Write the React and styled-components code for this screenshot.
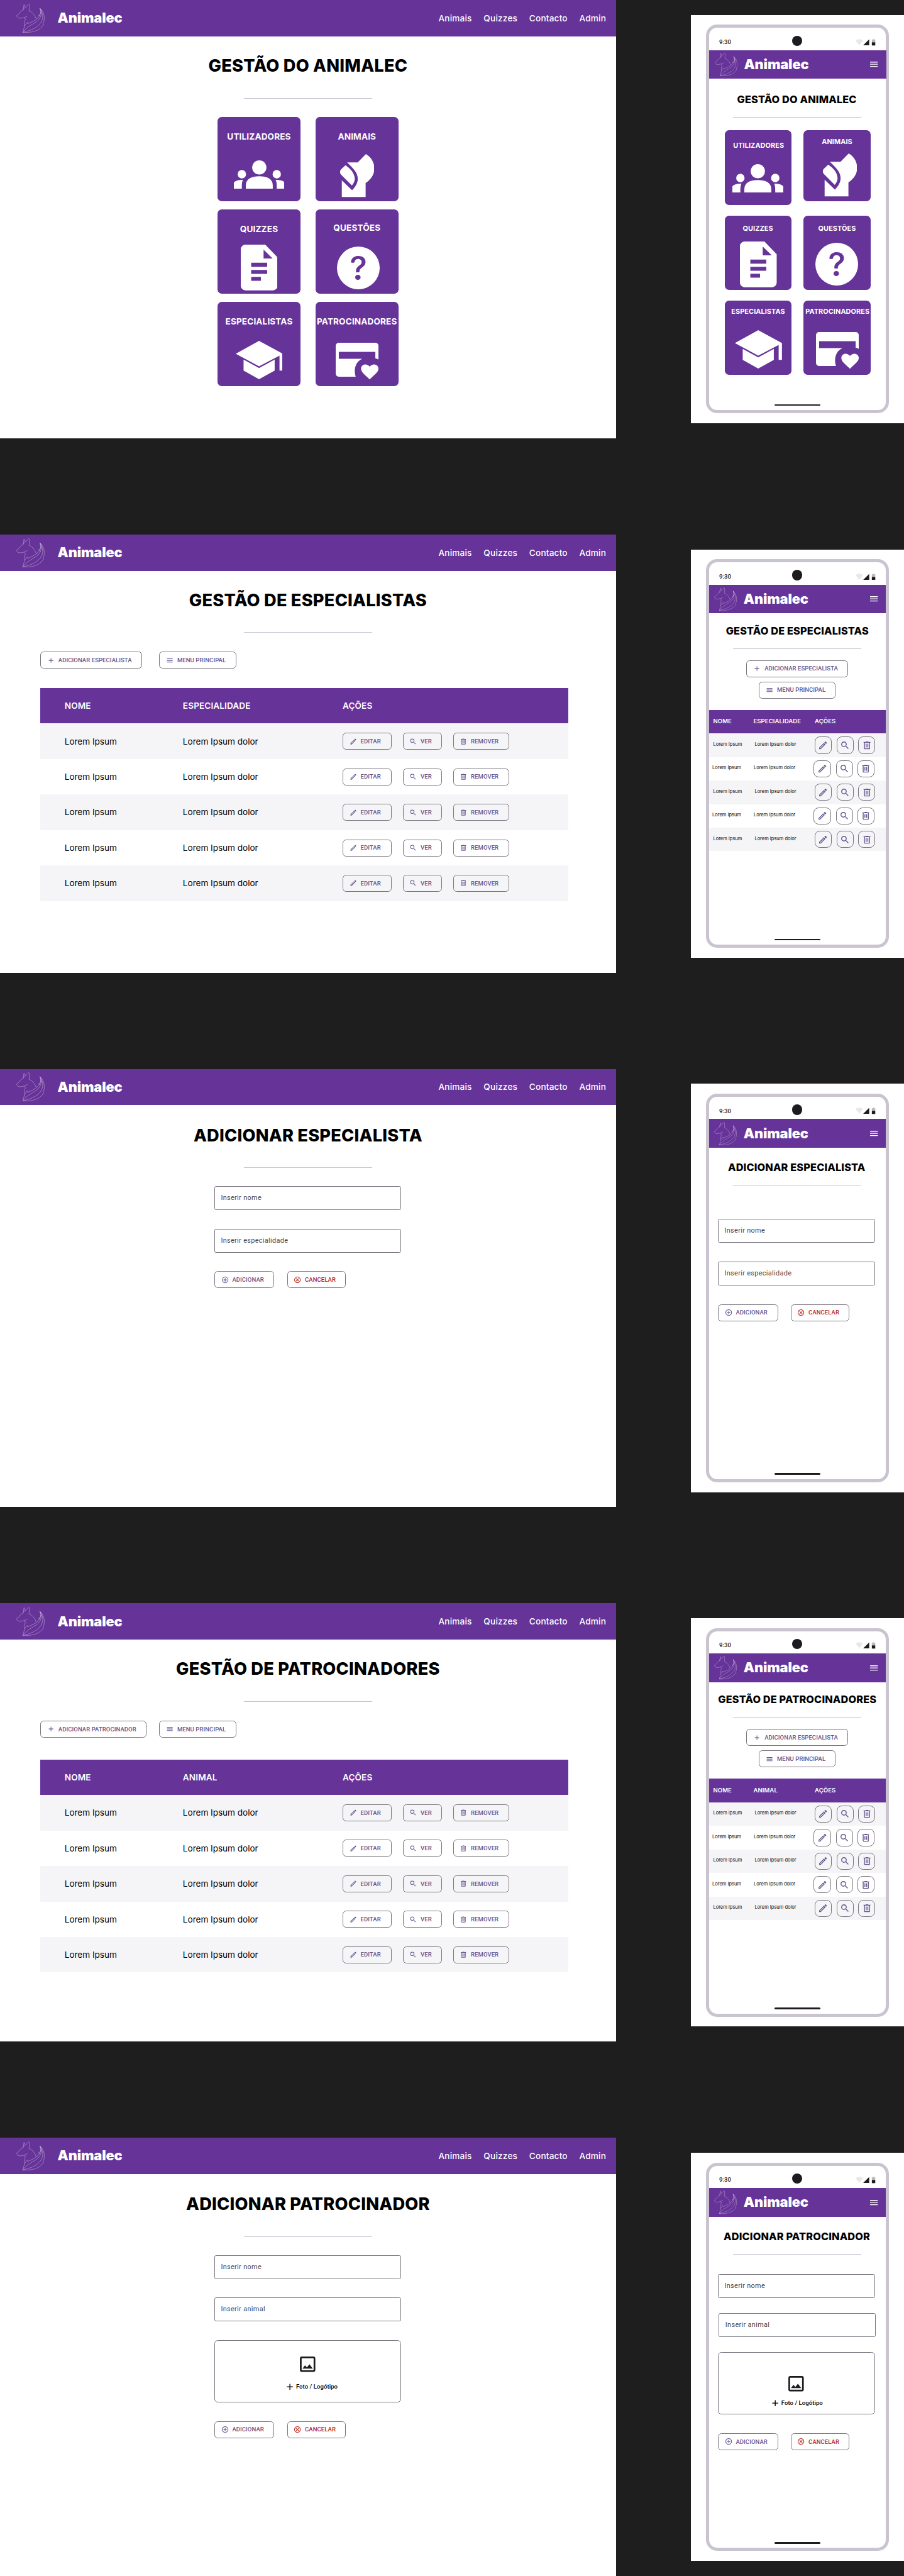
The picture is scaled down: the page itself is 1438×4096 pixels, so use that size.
import React from 'react';
import styled, { createGlobalStyle, css } from 'styled-components';
import {
  MdAdd,
  MdMenu,
  MdOutlineEdit,
  MdSearch,
  MdAddCircleOutline,
  MdOutlineCancel,
  MdOutlineImage,
} from 'react-icons/md';
import { BsQuestionCircleFill } from 'react-icons/bs';

const c = {
  canvas: '#1e1e1e',
  brand: '#663399',
  accent: '#65558f',
  outline: '#79747e',
  divider: '#cac4d0',
  frame: '#cac4d0',
  ink: '#1d1b20',
  muted: '#49454f',
  danger: '#b3261e',
  stripe: '#f5f5f8',
};

const inter = `Inter, "Liberation Sans", sans-serif`;
const roboto = `Roboto, "Liberation Sans", sans-serif`;

const Global = createGlobalStyle`
  *, *::before, *::after { box-sizing: border-box; }
  body { margin: 0; background: ${c.canvas}; overflow-x: hidden; }
  svg { display: block; flex: none; }
`;

/* ---------- board ---------- */

const Board = styled.main`
  zoom: 0.6804;
  display: flex;
  flex-direction: column;
  gap: 225px;
  width: 2114px;
  height: 6020px;
  overflow: hidden;
  background: ${c.canvas};
  font-family: ${inter};
`;

const Pair = styled.section`
  display: flex;
  gap: 175px;
  height: 1024px;
  flex: none;
`;

const Desktop = styled.div`
  width: 1440px;
  height: 1024px;
  flex: none;
  background: #fff;
`;

const MobileSheet = styled.div`
  flex: 1;
  height: 954px;
  margin-top: 35px;
  padding: 23px 0 0 35px;
  background: #fff;
`;

const Phone = styled.div`
  display: flex;
  flex-direction: column;
  width: 428px;
  height: 908px;
  border: 8px solid ${c.frame};
  border-radius: 26px;
  background: #fff;
`;

const PhoneBody = styled.div`
  flex: 1;
  min-height: 0;
`;

const HomeBar = styled.div`
  flex: none;
  align-self: center;
  width: 108px;
  height: 4px;
  margin-bottom: 10px;
  border-radius: 4px;
  background: ${c.ink};
`;

/* ---------- bars ---------- */

const StatusRow = styled.div`
  display: grid;
  grid-template-columns: 1fr 24px 1fr;
  align-items: center;
  height: 52px;
  padding: 10px 24px 0;
  flex: none;
`;

const Clock = styled.span`
  font: 500 14px/20px ${roboto};
  letter-spacing: 0.14px;
  color: ${c.ink};
  padding-top: 4px;
`;

const Camera = styled.span`
  width: 24px;
  height: 24px;
  margin-top: -2px;
  border-radius: 50%;
  background: ${c.ink};
`;

const StatusIcons = styled.span`
  display: flex;
  justify-content: flex-end;
  align-items: flex-end;
  padding-top: 5px;
`;

const TopBar = styled.header`
  display: flex;
  align-items: center;
  flex: none;
  height: 85px;
  padding: 0 23px 0 38px;
  background: ${c.brand};
  color: #fff;
  ${(p) =>
    p.$phone &&
    css`
      height: 67px;
      padding: 0 16px 0 13px;
      margin: 0 ${-(p.$nudge || 0)}px 0 ${p.$nudge || 0}px;
    `}
`;

const Brand = styled.span`
  margin-left: ${(p) => (p.$phone ? 15 : 30.5)}px;
  font: 900 32px/40px ${inter};
  letter-spacing: -0.2px;
`;

const Nav = styled.nav`
  display: flex;
  gap: 27.5px;
  margin-left: auto;
`;

const NavLink = styled.a`
  font: 500 20px/24px ${inter};
  letter-spacing: 0.3px;
`;

const MenuButton = styled.span`
  margin-left: auto;
  font-size: 24px;
`;

/* ---------- headings ---------- */

const Title = styled.h1`
  margin: ${(p) => p.$top}px 0 0 ${(p) => p.$dx || 0}px;
  font: 800 ${(p) => (p.$phone ? '24px/30px' : '40px/48px')} ${inter};
  letter-spacing: ${(p) => (p.$phone ? 0.22 : 0.33)}px;
  text-align: center;
  white-space: nowrap;
  color: #000;
`;

const Rule = styled.hr`
  width: 300px;
  height: 1px;
  margin: ${(p) => p.$top}px auto 0;
  border: 0;
  background: ${c.divider};
`;

/* ---------- dashboard cards ---------- */

const CardGrid = styled.div`
  display: grid;
  justify-content: center;
  margin-top: 43px;
  grid-template-columns: 194px 194px;
  grid-auto-rows: 197px;
  gap: 19px 35px;
  ${(p) =>
    p.$phone &&
    css`
      margin-top: 31px;
      margin-right: -1px;
      grid-template-columns: 156px 156px;
      grid-auto-rows: 174px;
      gap: 25px 29px;
    `}
`;

const Card = styled.a`
  display: flex;
  flex-direction: column;
  align-items: center;
  height: ${(p) => (p.$h ? `${p.$h}px` : '100%')};
  border-radius: 10px;
  background: ${c.brand};
  color: #fff;
`;

const CardLabel = styled.span`
  margin-top: ${(p) => p.$y - 12}px;
  margin-left: ${(p) => (p.$dx || 0) * 2}px;
  font: 700 ${(p) => (p.$phone ? 16 : 20)}px/24px ${inter};
  letter-spacing: ${(p) => (p.$phone ? 0.13 : 0.17)}px;
`;

const CardIcon = styled.span`
  margin-top: ${(p) => p.$gap}px;
  margin-left: ${(p) => (p.$dx || 0) * 2}px;
`;

/* ---------- buttons ---------- */

const Button = styled.button`
  display: inline-flex;
  align-items: center;
  gap: 8px;
  height: 40px;
  width: ${(p) => (p.$w ? `${p.$w}px` : 'auto')};
  flex: none;
  margin: 0;
  padding: 0 22px 0 ${(p) => (p.$compact ? 14.5 : 15)}px;
  border: 1px solid ${c.outline};
  border-radius: 8px;
  background: transparent;
  color: ${(p) => (p.$danger ? c.danger : c.accent)};
  font: 500 14px/20px ${roboto};
  letter-spacing: 0.1px;
  white-space: nowrap;
  svg { width: 18px; height: 18px; }
`;

const IconButton = styled.button`
  display: inline-flex;
  align-items: center;
  justify-content: center;
  flex: none;
  width: 40px;
  height: 40px;
  padding: 0;
  border: 1px solid ${c.outline};
  border-radius: 12px;
  background: transparent;
  color: ${c.accent};
  svg { width: 24px; height: 24px; }
`;

const Toolbar = styled.div`
  display: flex;
  gap: ${(p) => p.$gap}px;
  margin: 45px 0 0 94px;
`;

const PhoneToolbar = styled.div`
  display: flex;
  flex-direction: column;
  align-items: center;
  gap: 10px;
  margin-top: 27px;
`;

/* ---------- table ---------- */

const Table = styled.div`
  width: 1234px;
  margin: ${(p) => p.$top}px 0 0 94px;
  ${(p) =>
    p.$phone &&
    css`
      width: 100%;
      margin: 26.5px 0 0;
    `}
`;

const Row = styled.div`
  display: grid;
  align-items: center;
  grid-template-columns: 276.5px 373.5px 1fr;
  height: 83px;
  padding-left: 57px;
  font: 400 20px/24px ${inter};
  letter-spacing: -0.05px;
  color: #000;
  background: ${(p) => (p.$striped ? c.stripe : 'transparent')};
  ${(p) =>
    p.$phone &&
    css`
      grid-template-columns: 97px 140px 1fr;
      height: 55px;
      padding: 0 0 0 ${p.$striped ? 10 : 8}px;
      font-size: 11px;
      letter-spacing: 0;
    `}
`;

const HeadRow = styled(Row)`
  background: ${c.brand};
  color: #fff;
  font-weight: 600;
  letter-spacing: 0.15px;
  ${(p) =>
    p.$phone &&
    css`
      grid-template-columns: 94px 143.5px 1fr;
      padding-left: 10px;
      font-size: 14px;
    `}
`;

const PhoneCell = styled.span`
  margin-top: -3px;
`;

const Actions = styled.div`
  display: flex;
  gap: 26px;
`;

const PhoneActions = styled.div`
  display: grid;
  grid-template-columns: 52px 50px 40px;
`;

/* ---------- forms ---------- */

const Form = styled.form`
  display: flex;
  flex-direction: column;
  gap: ${(p) => p.$gap}px;
  width: ${(p) => (p.$phone ? 367 : 437)}px;
  margin: ${(p) => p.$top}px 0 0 ${(p) => (p.$phone ? 21 : 501)}px;
`;

const Field = styled.div`
  display: flex;
  align-items: center;
  height: 56px;
  padding: 0 14px;
  margin: 0 ${(p) => -(p.$nudge || 0)}px 0 ${(p) => p.$nudge || 0}px;
  border: 1px solid ${c.outline};
  border-radius: 4px;
  font: 400 16px/24px ${roboto};
  letter-spacing: 0.5px;
  color: ${c.muted};
`;

const Upload = styled.div`
  display: flex;
  flex-direction: column;
  align-items: center;
  height: 146.5px;
  padding-top: ${(p) => (p.$phone ? 49 : 32)}px;
  border: 1px solid ${c.outline};
  border-radius: 8px;
  color: ${c.ink};
`;

const UploadLabel = styled.span`
  display: flex;
  align-items: center;
  gap: 2.5px;
  margin-top: ${(p) => (p.$phone ? 10 : 16)}px;
  margin-left: ${(p) => (p.$phone ? 0 : 16)}px;
  font: 500 14px/24px ${roboto};
  letter-spacing: 0.1px;
  color: #000;
`;

const FormButtons = styled.div`
  display: flex;
  gap: 29.5px;
  margin-top: ${(p) => p.$extra || 0}px;
`;

/* ---------- drawings ---------- */

const FoxLogo = ({ width, height }) => (
  <svg width={width} height={height} viewBox="0 0 195 205" preserveAspectRatio="none" fill="none" stroke="#fff" strokeOpacity="0.66" strokeWidth="2.3" strokeLinejoin="round">
    <path d="M2 83C8 75 17 74 22 66C28 53 37 48 47 43L53 6L63 25L86 2C92 10 92 24 87 49C105 57 126 72 137 108" />
    <path d="M47 43C50 33 56 29 63 25M2 83C6 96 14 102 25 102C40 101 62 96 77 86" />
    <path d="M53 98C70 106 56 118 57 134C57 144 61 148 57 156L45 201" />
    <path d="M57 156C63 146 68 138 75 131L79 141C100 129 130 122 148 100C160 88 166 76 173 54" />
    <path d="M163 32C168 50 170 62 163 77L156 86L155 77M163 32C190 54 198 92 190 128C188 134 184 138 184 142L189 145C166 182 130 204 45 202" />
    <path d="M163 32C178 62 176 98 140 126C104 150 76 160 45 201" />
    <path d="M45 201C98 188 142 172 168 134C190 104 184 60 163 32" />
  </svg>
);

const UsersArt = () => (
  <svg width="119" height="66" viewBox="0 0 119 66" fill="#fff">
    <circle cx="59.5" cy="16.6" r="16.6" />
    <circle cx="18.7" cy="32.3" r="9.8" />
    <circle cx="100.3" cy="32.3" r="9.8" />
    <path d="M28 66V58C28 43 42 37 59.5 37S91 43 91 58V66Z" />
    <path d="M0 66V52C3 47.5 11 45.600 21.5 45.600C19 50 18.7 54 18.7 66ZM119 66V52C116 47.5 108 45.600 97.5 45.600C100 50 100.3 54 100.3 66Z" />
  </svg>
);

const AnimalArt = () => (
  <svg width="80" height="101" viewBox="0 0 80 101" fill="#fff">
    <path d="M16.3 19.3H41.3L60.3 0C73 7 80 20 80 34C80 48 72 59 59.7 67.6V100.5H4V61.2L28 84.4C37 75 41.5 67 41.3 57C41.3 44 31 33 16.3 19.3Z" />
    <path d="M12.5 26C23 33 34 44 34.3 57.5C34.3 64 31 70 27.7 73.4L2 47.7C-.7 45-.7 38.5 2 36Z" />
  </svg>
);

const DocArt = () => (
  <svg width="86" height="107" viewBox="0 0 86 107" fill="#fff" fillRule="evenodd">
    <path d="M10.7 0H57.3L86 29.6V96.2A10.7 10.7 0 0 1 75.3 106.9H10.7A10.7 10.7 0 0 1 0 96.2V10.7A10.7 10.7 0 0 1 10.7 0ZM53.3 11.8V32.5H74.5ZM24.3 42.3V51.8H61.7V42.3ZM24.3 59V68.3H61.7V59ZM24.3 75.5V84.7H47V75.5Z" />
  </svg>
);

const SchoolArt = () => (
  <svg width="110" height="90" viewBox="0 0 110 90" fill="#fff">
    <path d="M0 30L54.5 0L110 30V69.6H102.3V34.5L54.5 59.5Z" />
    <path d="M18.3 43.8L54.5 63.6L91 43.8V69.6L54.5 89.6L18.3 69.6Z" />
  </svg>
);

const SponsorArt = () => (
  <svg width="100" height="86" viewBox="0 0 100 86" fill="#fff">
    <path d="M7 0H93A7 7 0 0 1 100 7V39.3Q96.5 37 92.7 36.4V21.3H7.3V37.4H62C47 43.5 41 62 46.7 79.3H7A7 7 0 0 1 0 72.3V7A7 7 0 0 1 7 0Z" />
    <path d="M79.5 56C73 47 59.3 50 59.3 60.5C59.3 68 66 73 79.5 85.5C93 73 100 68 100 60.5C100 50 86 47 79.5 56Z" />
  </svg>
);

const TrashIcon = () => (
  <svg viewBox="0 0 24 24" fill="currentColor">
    <path d="M7 21q-.825 0-1.412-.587T5 19V6H4V4h5V3h6v1h5v2h-1v13q0 .825-.587 1.413T17 21H7ZM17 6H7v13h10V6ZM9 17h2V8H9v9Zm4 0h2V8h-2v9Z" />
  </svg>
);

const SystemIcons = () => (
  <svg width="46" height="16" viewBox="0 0 46 16">
    <path d="M0 4C5-.8 12.5-.8 17.3 4L8.7 14.3Z" fill="#e8e7ea" />
    <path d="M17.7 14.8L31.8 .6V14.8Z" fill={c.ink} />
    <path d="M38 1.8H40.3V.4H43.7V1.8H46V8H38Z" fill="#bbbabc" />
    <path d="M38 7.8H46V15.2H38Z" fill={c.ink} />
  </svg>
);

/* ---------- shared pieces ---------- */

const DesktopBar = () => (
  <TopBar>
    <FoxLogo width={66} height={68} />
    <Brand>Animalec</Brand>
    <Nav>
      {['Animais', 'Quizzes', 'Contacto', 'Admin'].map((item) => (
        <NavLink key={item}>{item}</NavLink>
      ))}
    </Nav>
  </TopBar>
);

const PhoneShell = ({ nudge, children }) => (
  <MobileSheet>
    <Phone>
      <StatusRow>
        <Clock>9:30</Clock>
        <Camera />
        <StatusIcons>
          <SystemIcons />
        </StatusIcons>
      </StatusRow>
      <TopBar $phone $nudge={nudge}>
        <FoxLogo width={53} height={55} />
        <Brand $phone>Animalec</Brand>
        <MenuButton>
          <MdMenu />
        </MenuButton>
      </TopBar>
      <PhoneBody>{children}</PhoneBody>
      <HomeBar />
    </Phone>
  </MobileSheet>
);

/* desk / phone: [label centre, icon top, icon shift, label shift, card height] */
const sections = [
  { label: 'UTILIZADORES', art: <UsersArt />, desk: [46, 102, 0], phone: [35, 79.5, 0, 1.5] },
  { label: 'ANIMAIS', art: <AnimalArt />, desk: [46, 87, 0], phone: [26, 54.5, 7, 0, 165] },
  { label: 'QUIZZES', art: <DocArt />, desk: [46, 83, 0], phone: [30, 61, 1.5, 0] },
  { label: 'QUESTÕES', art: <BsQuestionCircleFill size={100} />, desk: [44, 87, 4], phone: [30, 64, 0, 0] },
  { label: 'ESPECIALISTAS', art: <SchoolArt />, desk: [46, 92, 0], phone: [24.5, 69.5, 1, 0.5] },
  { label: 'PATROCINADORES', art: <SponsorArt />, desk: [46, 96.5, 0], phone: [24.5, 74, 1, 1] },
];

const SectionCards = ({ phone }) => (
  <CardGrid $phone={phone}>
    {sections.map((s) => {
      const [labelY, iconY, iconDx, labelDx, height] = phone ? s.phone : s.desk;
      return (
        <Card key={s.label} $h={height}>
          <CardLabel $phone={phone} $y={labelY} $dx={labelDx}>{s.label}</CardLabel>
          <CardIcon $gap={iconY - labelY - 12} $dx={iconDx}>{s.art}</CardIcon>
        </Card>
      );
    })}
  </CardGrid>
);

const rows = [0, 1, 2, 3, 4];

const DesktopTable = ({ second, top }) => (
  <Table $top={top}>
    <HeadRow>
      <span>NOME</span>
      <span>{second}</span>
      <span>AÇÕES</span>
    </HeadRow>
    {rows.map((i) => (
      <Row key={i} $striped={i % 2 === 0}>
        <span>Lorem Ipsum</span>
        <span>Lorem Ipsum dolor</span>
        <Actions>
          <Button $compact $w={114.5}><MdOutlineEdit />EDITAR</Button>
          <Button $compact $w={91.5}><MdSearch />VER</Button>
          <Button $compact $w={131}><TrashIcon />REMOVER</Button>
        </Actions>
      </Row>
    ))}
  </Table>
);

const PhoneTable = ({ second }) => (
  <Table $phone>
    <HeadRow $phone>
      <span>NOME</span>
      <span>{second}</span>
      <span>AÇÕES</span>
    </HeadRow>
    {rows.map((i) => (
      <Row key={i} $phone $striped={i % 2 === 0}>
        <PhoneCell>Lorem Ipsum</PhoneCell>
        <PhoneCell>Lorem Ipsum dolor</PhoneCell>
        <PhoneActions>
          <IconButton><MdOutlineEdit /></IconButton>
          <IconButton><MdSearch /></IconButton>
          <IconButton><TrashIcon /></IconButton>
        </PhoneActions>
      </Row>
    ))}
  </Table>
);

const SubmitButtons = ({ extra }) => (
  <FormButtons $extra={extra}>
    <Button type="button" $compact $w={140.5}><MdAddCircleOutline />ADICIONAR</Button>
    <Button type="button" $compact $w={138} $danger><MdOutlineCancel />CANCELAR</Button>
  </FormButtons>
);

const PhotoUpload = ({ phone }) => (
  <Upload $phone={phone}>
    <MdOutlineImage size={48} />
    <UploadLabel $phone={phone}><MdAdd size={24} />Foto / Logótipo</UploadLabel>
  </Upload>
);

/* ---------- screens ---------- */

const Dashboard = () => (
  <Pair>
    <Desktop>
      <DesktopBar />
      <Title $top={46.5}>GESTÃO DO ANIMALEC</Title>
      <Rule $top={49.5} />
      <SectionCards />
    </Desktop>
    <PhoneShell nudge={1}>
      <Title $phone $top={32.5} $dx={-2}>GESTÃO DO ANIMALEC</Title>
      <Rule $top={26} />
      <SectionCards phone />
    </PhoneShell>
  </Pair>
);

const Manager = ({ title, add, addWidth, gap, tableTop, second }) => (
  <Pair>
    <Desktop>
      <DesktopBar />
      <Title $top={45.5}>{title}</Title>
      <Rule $top={49.5} />
      <Toolbar $gap={gap}>
        <Button $w={addWidth}><MdAdd />{add}</Button>
        <Button $w={180}><MdMenu />MENU PRINCIPAL</Button>
      </Toolbar>
      <DesktopTable second={second} top={tableTop} />
    </Desktop>
    <PhoneShell>
      <Title $phone $top={25.5}>{title}</Title>
      <Rule $top={26} />
      <PhoneToolbar>
        <Button $w={238}><MdAdd />ADICIONAR ESPECIALISTA</Button>
        <Button $w={180}><MdMenu />MENU PRINCIPAL</Button>
      </PhoneToolbar>
      <PhoneTable second={second} />
    </PhoneShell>
  </Pair>
);

const AddSpecialist = () => (
  <Pair>
    <Desktop>
      <DesktopBar />
      <Title $top={47.5}>ADICIONAR ESPECIALISTA</Title>
      <Rule $top={49.5} />
      <Form $gap={43} $top={43.5}>
        <Field>Inserir nome</Field>
        <Field>Inserir especialidade</Field>
        <SubmitButtons />
      </Form>
    </Desktop>
    <PhoneShell>
      <Title $phone $top={31} $dx={-3}>ADICIONAR ESPECIALISTA</Title>
      <Rule $top={26.5} />
      <Form $phone $gap={43.5} $top={78}>
        <Field>Inserir nome</Field>
        <Field>Inserir especialidade</Field>
        <SubmitButtons />
      </Form>
    </PhoneShell>
  </Pair>
);

const AddSponsor = () => (
  <Pair>
    <Desktop>
      <DesktopBar />
      <Title $top={47.5}>ADICIONAR PATROCINADOR</Title>
      <Rule $top={49.5} />
      <Form $gap={43} $top={43.5}>
        <Field>Inserir nome</Field>
        <Field>Inserir animal</Field>
        <PhotoUpload />
        <SubmitButtons />
      </Form>
    </Desktop>
    <PhoneShell>
      <Title $phone $top={31} $dx={-2}>ADICIONAR PATROCINADOR</Title>
      <Rule $top={26} />
      <Form $phone $gap={35} $top={46}>
        <Field>Inserir nome</Field>
        <Field $nudge={2}>Inserir animal</Field>
        <PhotoUpload phone />
        <SubmitButtons extra={8.5} />
      </Form>
    </PhoneShell>
  </Pair>
);

export default function App() {
  return (
    <>
      <Global />
      <Board>
        <Dashboard />
        <Manager
          title="GESTÃO DE ESPECIALISTAS"
          add="ADICIONAR ESPECIALISTA"
          addWidth={238}
          gap={40}
          tableTop={45}
          second="ESPECIALIDADE"
        />
        <AddSpecialist />
        <Manager
          title="GESTÃO DE PATROCINADORES"
          add="ADICIONAR PATROCINADOR"
          addWidth={249}
          gap={29}
          tableTop={51}
          second="ANIMAL"
        />
        <AddSponsor />
      </Board>
    </>
  );
}
